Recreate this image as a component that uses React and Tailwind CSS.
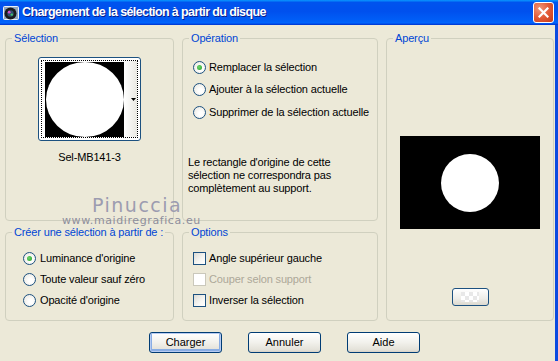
import React from "react";

const Radio = ({ checked }) => (
  <span className="relative flex h-[13px] w-[13px] shrink-0 items-center justify-center rounded-full border border-[#1C5180] bg-[radial-gradient(circle_at_60%_60%,#ffffff_20%,#E6E4DC_100%)]">
    {checked && (
      <span className="h-[5px] w-[5px] rounded-full bg-[radial-gradient(circle_at_40%_40%,#6ED36E,#21A121)]" />
    )}
  </span>
);

const Checkbox = ({ disabled }) => (
  <span
    className={
      disabled
        ? "h-[13px] w-[13px] shrink-0 border border-[#CAC8BB] bg-white"
        : "h-[13px] w-[13px] shrink-0 border border-[#1C5180] bg-[linear-gradient(135deg,#DCDBD5_0%,#F6F6F3_60%,#ffffff_100%)]"
    }
  />
);

const Group = ({ title, className, children }) => (
  <fieldset className={`rounded-[4px] border border-[#D0D0BF] ${className}`}>
    <legend className="ml-[6px] px-[2px] text-[11px] leading-[13px] text-[#0046D5]">
      {title}
    </legend>
    {children}
  </fieldset>
);

const XpButton = ({ label, primary }) => (
  <button
    className={`h-[21px] w-[73px] rounded-[3px] border border-[#003C74] bg-[linear-gradient(to_bottom,#FFFFFF_0%,#F2F1EC_50%,#E3E1D8_90%,#D6D0C5_100%)] text-[11px] leading-[13px] text-black ${
      primary ? "shadow-[inset_0_0_0_1px_#B7CBF2,inset_0_-1px_0_2px_#89ADE4]" : ""
    }`}
  >
    {label}
  </button>
);

export default function App() {
  return (
    <div className="relative h-[361px] w-[558px] overflow-hidden bg-[#ECE9D8] font-['Liberation_Sans',Arial,sans-serif]">
      {/* Title bar */}
      <div className="flex h-[25px] items-center bg-[linear-gradient(to_bottom,#0997FF_0%,#0053EE_10%,#0050EE_45%,#0060F8_85%,#0066FF_92%,#003DD7_97%,#003DD7_100%)] pl-[3px] pr-[4px]">
        <svg width="16" height="16" viewBox="0 0 16 16" className="shrink-0">
          <rect x="0.5" y="1.5" width="15" height="13" rx="1" fill="#8FA6BF" stroke="#EAF0F6" />
          <circle cx="7.5" cy="8.5" r="6" fill="#1B1B1B" />
          <circle cx="7.5" cy="8.5" r="3.2" fill="#2F4F6F" />
          <circle cx="6.2" cy="7.2" r="1.4" fill="#D94EC9" />
          <circle cx="8.8" cy="9.6" r="1.2" fill="#43C46A" />
        </svg>
        <span className="ml-[3px] text-[12.5px] font-bold tracking-[-0.6px] text-white [text-shadow:1px_1px_0_#0A1E8A]">
          Chargement de la sélection à partir du disque
        </span>
        <div className="ml-auto flex h-[21px] w-[21px] items-center justify-center rounded-[3px] border border-white bg-[radial-gradient(circle_at_30%_30%,#F0977A_0%,#E25A37_50%,#C63A17_100%)]">
          <svg width="11" height="11" viewBox="0 0 11 11">
            <path d="M1.5 1.5 L9.5 9.5 M9.5 1.5 L1.5 9.5" stroke="#fff" strokeWidth="2.2" strokeLinecap="square" />
          </svg>
        </div>
      </div>

      {/* Body */}
      <div className="h-[336px] border-r-[3px] border-r-[#0B4AE0] pl-[5px] pt-[7px]">
        <div className="grid grid-cols-[169px_196px_168px] grid-rows-[189px_95px] gap-x-2 gap-y-[5px] text-[11px] leading-[13px] tracking-[-0.15px] text-black">
          <Group title="Sélection">
            <div className="mx-auto mt-[12px] flex h-[84px] w-[103px] rounded-[3px] border border-[#1C5180] bg-white p-[2px]">
              <div className="flex flex-1 items-center border border-dotted border-black pl-[3px]">
                <svg width="79" height="75" viewBox="0 0 79 75" className="shrink-0">
                  <rect width="79" height="75" fill="#000" />
                  <ellipse cx="40" cy="37.5" rx="39" ry="37.5" fill="#fff" />
                </svg>
                <div className="flex h-full flex-1 items-center justify-end bg-[linear-gradient(to_right,#ffffff,#E9E8E2)] pr-[1px]">
                  <svg width="5" height="3" viewBox="0 0 5 3">
                    <path d="M0 0 H5 L2.5 3 Z" fill="#000" />
                  </svg>
                </div>
              </div>
            </div>
            <div className="mt-[10px] text-center">Sel-MB141-3</div>
          </Group>

          <Group title="Opération">
            <div className="mt-[11px] flex flex-col pl-[10px]">
              {[
                ["Remplacer la sélection", true],
                ["Ajouter à la sélection actuelle", false],
                ["Supprimer de la sélection actuelle", false],
              ].map(([label, checked]) => (
                <div key={label} className="flex h-[22.5px] items-center gap-[3px]">
                  <Radio checked={checked} />
                  <span>{label}</span>
                </div>
              ))}
            </div>
            <p className="mt-[32px] pl-[5px]">
              Le rectangle d'origine de cette
              <br />
              sélection ne correspondra pas
              <br />
              complètement au support.
            </p>
          </Group>

          <Group title="Aperçu" className="row-span-2">
            <div className="mx-auto mt-[91px] h-[93px] w-[140px]">
              <svg width="140" height="93" viewBox="0 0 140 93">
                <rect width="140" height="93" fill="#000" />
                <circle cx="70" cy="47" r="29" fill="#fff" />
              </svg>
            </div>
            <div className="mx-auto mt-[59px] h-[18px] w-[37px] rounded-[3px] border border-[#1C5180] bg-[linear-gradient(to_bottom,#FFFFFF,#EEEDE8_60%,#DCD9CF)] p-[3px]">
              <div className="mx-auto h-full w-[18px] bg-[conic-gradient(#ffffff_25%,#E8E8E8_0_50%,#ffffff_0_75%,#E8E8E8_0)] bg-[length:8px_8px]" />
            </div>
          </Group>

          <Group title="Créer une sélection à partir de :">
            <div className="mt-[9px] flex flex-col pl-[17px]">
              {[
                ["Luminance d'origine", true],
                ["Toute valeur sauf zéro", false],
                ["Opacité d'origine", false],
              ].map(([label, checked]) => (
                <div key={label} className="flex h-[21px] items-center gap-[4px]">
                  <Radio checked={checked} />
                  <span>{label}</span>
                </div>
              ))}
            </div>
          </Group>

          <Group title="Options">
            <div className="mt-[9px] flex flex-col pl-[10px]">
              <div className="flex h-[21px] items-center gap-[3px]">
                <Checkbox />
                <span>Angle supérieur gauche</span>
              </div>
              <div className="flex h-[21px] items-center gap-[3px]">
                <Checkbox disabled />
                <span className="text-[#ACA899]">Couper selon support</span>
              </div>
              <div className="flex h-[21px] items-center gap-[3px]">
                <Checkbox />
                <span>Inverser la sélection</span>
              </div>
            </div>
          </Group>
        </div>

        <div className="mt-[11px] flex gap-[26px] pl-[144px]">
          <XpButton label="Charger" primary />
          <XpButton label="Annuler" />
          <XpButton label="Aide" />
        </div>
      </div>

      {/* Watermark */}
      <div className="pointer-events-none absolute left-[92px] top-[195px] font-['DejaVu_Sans',sans-serif] text-[19px] leading-[20px] tracking-[1.5px] text-[#9C9CB0]">
        Pinuccia
      </div>
      <div className="pointer-events-none absolute left-[62px] top-[215px] font-['DejaVu_Sans',sans-serif] text-[11px] leading-[12px] tracking-[0.6px] text-[#8E8E9C]">
        www.maidiregrafica.eu
      </div>
    </div>
  );
}
